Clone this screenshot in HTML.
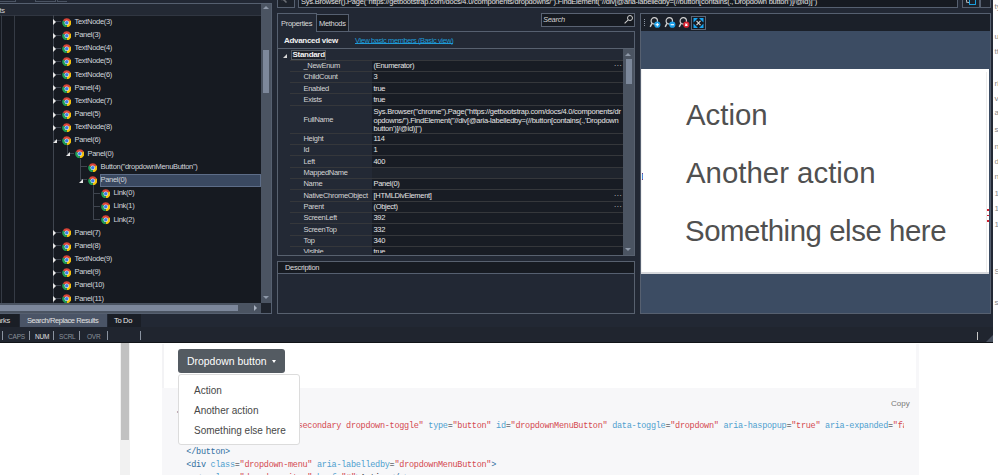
<!DOCTYPE html>
<html><head><meta charset="utf-8">
<style>
*{margin:0;padding:0;box-sizing:border-box}
html,body{width:998px;height:475px;overflow:hidden;background:#fff;font-family:"Liberation Sans",sans-serif}
.a{position:absolute}
#app{position:absolute;left:0;top:0;width:993px;height:343px;background:#222834;overflow:hidden}
.t{position:absolute;white-space:nowrap;font-size:7.5px;letter-spacing:-0.3px;color:#d8d8d8;line-height:11px}
.ci{position:absolute;width:10px;height:10px;border-radius:50%;
 background:radial-gradient(circle,#3a7ce8 0 1.5px,#f0f0f0 1.8px 2.3px,transparent 2.6px),conic-gradient(from -60deg,#d8412f 0 120deg,#f2c01a 120deg 240deg,#1e9a4a 240deg 360deg)}
.tl{position:absolute;background:#5c6370}
.arr{position:absolute;width:0;height:0;border-top:3px solid transparent;border-bottom:3px solid transparent;border-left:3px solid #e8e8e8}
.arx{position:absolute;width:0;height:0;border-left:4px solid transparent;border-bottom:4px solid #e8e8e8}
</style></head>
<body>
<div id="app">
 <!-- LEFT PANEL -->
 <div class="a" style="left:-1px;top:-1px;width:17px;height:3px;border:1px solid #4a5362;border-top:0"></div>
 <div class="a" style="left:35px;top:-1px;width:21px;height:3px;border:1px solid #4a5362;border-top:0"></div><div class="a" style="left:57px;top:-1px;width:10px;height:3px;border:1px solid #4a5362;border-top:0;border-right:0"></div>
 
 <div class="a" style="left:0;top:3px;width:272px;height:311px;border:1px solid #566070;border-left:0;background:#161a21"></div>
 <div class="a" style="left:0;top:4px;width:261px;height:12px;background:#232934;border-bottom:1px solid #303641"></div>
 <div class="t" style="left:-4px;top:5px;color:#d0d0d0">sts</div>
 <div class="a" style="left:1px;top:15px;width:1px;height:288px;background:#353b45"></div>
 <div class="a" style="left:14px;top:15px;width:1px;height:288px;background:#353b45"></div>
 <!-- v scrollbar -->
 <div class="a" style="left:261px;top:4px;width:10px;height:299px;background:#4b5462"></div>
 <div class="a" style="left:263px;top:6px;width:0;height:0;border-left:3px solid transparent;border-right:3px solid transparent;border-bottom:3px solid #8e98a8"></div>
 <div class="a" style="left:263px;top:296px;width:0;height:0;border-left:3px solid transparent;border-right:3px solid transparent;border-top:3px solid #8e98a8"></div>
 <div class="a" style="left:263px;top:49.5px;width:6px;height:43px;background:#7d889b"></div>
 <!-- h scrollbar -->
 <div class="a" style="left:0;top:303px;width:261px;height:10px;background:#4b5462"></div><div class="a" style="left:0;top:305px;width:237.5px;height:6px;background:#7c879b"></div>
 <div class="a" style="left:254px;top:305px;width:0;height:0;border-top:3px solid transparent;border-bottom:3px solid transparent;border-left:3px solid #a9b2c0"></div>
 <div class="a" style="left:261px;top:303px;width:10px;height:10px;background:#1e232c"></div>
 <svg width="0" height="0" style="position:absolute"><defs><symbol id="chr" viewBox="0 0 18 18"><path d="M9 9L1.552 4.7A8.6 8.6 0 0 1 16.448 4.7Z" fill="#db4437"/><path d="M9 9L16.448 4.7A8.6 8.6 0 0 1 9 17.6Z" fill="#f4c20d"/><path d="M9 9L9 17.6A8.6 8.6 0 0 1 1.552 4.7Z" fill="#1f9d55"/><circle cx="9" cy="9" r="4.3" fill="#f2f2f2"/><circle cx="9" cy="9" r="3.3" fill="#3b7de6"/></symbol></defs></svg><div class="tl" style="left:53px;top:15px;width:1px;height:288px;background:#3f454f"></div>
<div class="tl" style="left:54px;top:21.4px;width:7px;height:1px;background:#3f454f"></div>
<div class="arr" style="left:52.5px;top:19.4px"></div>
<svg class="a" style="left:61.7px;top:17.65px" width="9.5" height="9.5" viewBox="0 0 18 18"><use href="#chr"/></svg>
<div class="t" style="left:74.5px;top:15.9px;color:#d2d6dc">TextNode(3)</div>
<div class="tl" style="left:54px;top:34.6px;width:7px;height:1px;background:#3f454f"></div>
<div class="arr" style="left:52.5px;top:32.6px"></div>
<svg class="a" style="left:61.7px;top:30.82px" width="9.5" height="9.5" viewBox="0 0 18 18"><use href="#chr"/></svg>
<div class="t" style="left:74.5px;top:29.1px;color:#d2d6dc">Panel(3)</div>
<div class="tl" style="left:54px;top:47.7px;width:7px;height:1px;background:#3f454f"></div>
<div class="arr" style="left:52.5px;top:45.7px"></div>
<svg class="a" style="left:61.7px;top:43.99px" width="9.5" height="9.5" viewBox="0 0 18 18"><use href="#chr"/></svg>
<div class="t" style="left:74.5px;top:42.2px;color:#d2d6dc">TextNode(4)</div>
<div class="tl" style="left:54px;top:60.9px;width:7px;height:1px;background:#3f454f"></div>
<div class="arr" style="left:52.5px;top:58.9px"></div>
<svg class="a" style="left:61.7px;top:57.16px" width="9.5" height="9.5" viewBox="0 0 18 18"><use href="#chr"/></svg>
<div class="t" style="left:74.5px;top:55.4px;color:#d2d6dc">TextNode(5)</div>
<div class="tl" style="left:54px;top:74.1px;width:7px;height:1px;background:#3f454f"></div>
<div class="arr" style="left:52.5px;top:72.1px"></div>
<svg class="a" style="left:61.7px;top:70.33px" width="9.5" height="9.5" viewBox="0 0 18 18"><use href="#chr"/></svg>
<div class="t" style="left:74.5px;top:68.6px;color:#d2d6dc">TextNode(6)</div>
<div class="tl" style="left:54px;top:87.2px;width:7px;height:1px;background:#3f454f"></div>
<div class="arr" style="left:52.5px;top:85.2px"></div>
<svg class="a" style="left:61.7px;top:83.50px" width="9.5" height="9.5" viewBox="0 0 18 18"><use href="#chr"/></svg>
<div class="t" style="left:74.5px;top:81.8px;color:#d2d6dc">Panel(4)</div>
<div class="tl" style="left:54px;top:100.4px;width:7px;height:1px;background:#3f454f"></div>
<div class="arr" style="left:52.5px;top:98.4px"></div>
<svg class="a" style="left:61.7px;top:96.67px" width="9.5" height="9.5" viewBox="0 0 18 18"><use href="#chr"/></svg>
<div class="t" style="left:74.5px;top:94.9px;color:#d2d6dc">TextNode(7)</div>
<div class="tl" style="left:54px;top:113.6px;width:7px;height:1px;background:#3f454f"></div>
<div class="arr" style="left:52.5px;top:111.6px"></div>
<svg class="a" style="left:61.7px;top:109.84px" width="9.5" height="9.5" viewBox="0 0 18 18"><use href="#chr"/></svg>
<div class="t" style="left:74.5px;top:108.1px;color:#d2d6dc">Panel(5)</div>
<div class="tl" style="left:54px;top:126.8px;width:7px;height:1px;background:#3f454f"></div>
<div class="arr" style="left:52.5px;top:124.8px"></div>
<svg class="a" style="left:61.7px;top:123.01px" width="9.5" height="9.5" viewBox="0 0 18 18"><use href="#chr"/></svg>
<div class="t" style="left:74.5px;top:121.3px;color:#d2d6dc">TextNode(8)</div>
<div class="tl" style="left:54px;top:139.9px;width:7px;height:1px;background:#3f454f"></div>
<div class="arx" style="left:52.5px;top:139.2px"></div>
<svg class="a" style="left:61.7px;top:136.18px" width="9.5" height="9.5" viewBox="0 0 18 18"><use href="#chr"/></svg>
<div class="t" style="left:74.5px;top:134.4px;color:#d2d6dc">Panel(6)</div>
<div class="tl" style="left:67px;top:153.1px;width:7px;height:1px;background:#3f454f"></div>
<div class="arx" style="left:65.5px;top:152.4px"></div>
<svg class="a" style="left:74.7px;top:149.35px" width="9.5" height="9.5" viewBox="0 0 18 18"><use href="#chr"/></svg>
<div class="t" style="left:87.5px;top:147.6px;color:#d2d6dc">Panel(0)</div>
<div class="tl" style="left:80px;top:166.3px;width:7px;height:1px;background:#3f454f"></div>
<svg class="a" style="left:87.7px;top:162.52px" width="9.5" height="9.5" viewBox="0 0 18 18"><use href="#chr"/></svg>
<div class="t" style="left:100.5px;top:160.8px;color:#d2d6dc">Button(&quot;dropdownMenuButton&quot;)</div>
<div class="tl" style="left:80px;top:179.4px;width:7px;height:1px;background:#3f454f"></div>
<div class="arx" style="left:78.5px;top:178.7px"></div>
<svg class="a" style="left:87.7px;top:175.69px" width="9.5" height="9.5" viewBox="0 0 18 18"><use href="#chr"/></svg>
<div class="a" style="left:100px;top:174px;width:161px;height:13px;background:#3a4961;border:1px solid #5d6d88"></div>
<div class="t" style="left:100.5px;top:173.9px;color:#d2d6dc">Panel(0)</div>
<div class="tl" style="left:93px;top:192.6px;width:7px;height:1px;background:#3f454f"></div>
<svg class="a" style="left:100.7px;top:188.86px" width="9.5" height="9.5" viewBox="0 0 18 18"><use href="#chr"/></svg>
<div class="t" style="left:113.5px;top:187.1px;color:#d2d6dc">Link(0)</div>
<div class="tl" style="left:93px;top:205.8px;width:7px;height:1px;background:#3f454f"></div>
<svg class="a" style="left:100.7px;top:202.03px" width="9.5" height="9.5" viewBox="0 0 18 18"><use href="#chr"/></svg>
<div class="t" style="left:113.5px;top:200.3px;color:#d2d6dc">Link(1)</div>
<div class="tl" style="left:93px;top:219.0px;width:7px;height:1px;background:#3f454f"></div>
<svg class="a" style="left:100.7px;top:215.20px" width="9.5" height="9.5" viewBox="0 0 18 18"><use href="#chr"/></svg>
<div class="t" style="left:113.5px;top:213.5px;color:#d2d6dc">Link(2)</div>
<div class="tl" style="left:54px;top:232.1px;width:7px;height:1px;background:#3f454f"></div>
<div class="arr" style="left:52.5px;top:230.1px"></div>
<svg class="a" style="left:61.7px;top:228.37px" width="9.5" height="9.5" viewBox="0 0 18 18"><use href="#chr"/></svg>
<div class="t" style="left:74.5px;top:226.6px;color:#d2d6dc">Panel(7)</div>
<div class="tl" style="left:54px;top:245.3px;width:7px;height:1px;background:#3f454f"></div>
<div class="arr" style="left:52.5px;top:243.3px"></div>
<svg class="a" style="left:61.7px;top:241.54px" width="9.5" height="9.5" viewBox="0 0 18 18"><use href="#chr"/></svg>
<div class="t" style="left:74.5px;top:239.8px;color:#d2d6dc">Panel(8)</div>
<div class="tl" style="left:54px;top:258.5px;width:7px;height:1px;background:#3f454f"></div>
<div class="arr" style="left:52.5px;top:256.5px"></div>
<svg class="a" style="left:61.7px;top:254.71px" width="9.5" height="9.5" viewBox="0 0 18 18"><use href="#chr"/></svg>
<div class="t" style="left:74.5px;top:253.0px;color:#d2d6dc">TextNode(9)</div>
<div class="tl" style="left:54px;top:271.6px;width:7px;height:1px;background:#3f454f"></div>
<div class="arr" style="left:52.5px;top:269.6px"></div>
<svg class="a" style="left:61.7px;top:267.88px" width="9.5" height="9.5" viewBox="0 0 18 18"><use href="#chr"/></svg>
<div class="t" style="left:74.5px;top:266.1px;color:#d2d6dc">Panel(9)</div>
<div class="tl" style="left:54px;top:284.8px;width:7px;height:1px;background:#3f454f"></div>
<div class="arr" style="left:52.5px;top:282.8px"></div>
<svg class="a" style="left:61.7px;top:281.05px" width="9.5" height="9.5" viewBox="0 0 18 18"><use href="#chr"/></svg>
<div class="t" style="left:74.5px;top:279.3px;color:#d2d6dc">Panel(10)</div>
<div class="tl" style="left:54px;top:298.0px;width:7px;height:1px;background:#3f454f"></div>
<div class="arr" style="left:52.5px;top:296.0px"></div>
<svg class="a" style="left:61.7px;top:294.22px" width="9.5" height="9.5" viewBox="0 0 18 18"><use href="#chr"/></svg>
<div class="t" style="left:74.5px;top:292.5px;color:#d2d6dc">Panel(11)</div>
<div class="tl" style="left:66.5px;top:145.4px;width:1px;height:8.2px;background:#3f454f"></div>
<div class="tl" style="left:79.5px;top:158.6px;width:1px;height:21.3px;background:#3f454f"></div>
<div class="tl" style="left:92.5px;top:184.9px;width:1px;height:34.5px;background:#3f454f"></div>

 <!-- MIDDLE PANEL -->
 <div class="a" style="left:277px;top:-3px;width:18px;height:11px;border:1px solid #566070;background:#1d222b"></div><svg class="a" style="left:280px;top:-4px" width="10" height="8"><path d="M2 2 L6.5 6.5" stroke="#6a6e74" stroke-width="1.6"/><path d="M1 3.5 L5 3.5" stroke="#6a6e74" stroke-width="1.4"/></svg>
 <div class="a" style="left:298px;top:-3px;width:660px;height:11px;border:1px solid #566070;background:#161a21;overflow:hidden">
  <div class="t" style="left:2px;top:-1.6px;letter-spacing:-0.22px;color:#e0e0e0">Sys.Browser().Page("https://getbootstrap.com/docs/4.0/components/dropdowns/").FindElement("//div[@aria-labelledby=(//button[contains(.,'Dropdown button')]/@id)]")</div>
 </div>
 <div class="a" style="left:962px;top:-3px;width:18px;height:11px;border:1px solid #566070;background:#1d222b"></div>
 <div class="a" style="left:969px;top:-1px;width:7px;height:6px;border:1.3px solid #1aa0e0;border-top:0;border-radius:0 0 1px 1px"></div><div class="a" style="left:966px;top:-2px;width:3px;height:5px;border:1.2px solid #b8b8b8;border-right:0;border-radius:2px 0 0 2px"></div>
 <div class="a" style="left:980px;top:-3px;width:11px;height:11px;border:1px solid #566070;background:#1d222b"></div>

 <!-- tabs -->
 <div class="a" style="left:277px;top:31px;width:358px;height:225px;border:1px solid #566070;background:#232935"></div>
 <div class="a" style="left:277px;top:13px;width:40px;height:19px;border:1px solid #566070;border-bottom:0;background:#232935"></div>
 <div class="t" style="left:281px;top:17.5px;color:#dadada">Properties</div>
 <div class="a" style="left:316px;top:14px;width:33px;height:17px;border:1px solid #566070;border-bottom:0;background:#181c23"></div>
 <div class="t" style="left:319px;top:17.5px;color:#dadada">Methods</div>
 <!-- search -->
 <div class="a" style="left:541px;top:13px;width:94px;height:14px;border:1px solid #5a6373;background:#161a21"></div>
 <div class="t" style="left:543px;top:14px;font-style:italic;color:#d0d0d0">Search</div>
 <div class="a" style="left:627px;top:15px;width:6px;height:6px;border:1.2px solid #d0d0d0;border-radius:50%"></div>
 <div class="a" style="left:624px;top:21px;width:5px;height:1.3px;background:#d0d0d0;transform:rotate(-45deg)"></div>

 <div class="t" style="left:284px;top:35px;font-size:8px;font-weight:bold;color:#f0f0f0">Advanced view</div>
 <div class="a" style="left:355px;top:43px;width:98px;height:1px;background:#1e9ad6"></div><div class="t" style="left:355px;top:35px;letter-spacing:-0.43px;color:#1e9ad6">View basic members (Basic view)</div>
 <!-- grid -->
 <div class="a" style="left:277px;top:48px;width:358px;height:208px;border:1px solid #58616f;background:#232935;overflow:hidden" id="grid"><div class="a" style="left:13px;top:1px;width:35px;height:10px;border:1px solid #50575f;background:#1c2028"></div>
<div class="t" style="left:14.5px;top:-0.5px;font-size:8px;letter-spacing:-0.3px;font-weight:bold;color:#f2f2f2">Standard</div>
<div class="a" style="left:5px;top:4.5px;width:0;height:0;border-left:4px solid transparent;border-bottom:4px solid #d8d8d8"></div>
<div class="a" style="left:94px;top:11.30px;width:252px;height:11.33px;background:#181c24"></div>
<div class="a" style="left:12px;top:10.50px;width:334px;height:1px;background:#35373b"></div>
<div class="t" style="left:25.5px;top:10.96px;color:#d4d4d4">_NewEnum</div>
<div class="t" style="left:95.5px;top:10.96px;color:#e6e6e6">(Enumerator)</div>
<div class="t" style="left:336px;top:8.96px;color:#cfcfcf;font-size:8px;letter-spacing:0.5px">...</div>
<div class="a" style="left:94px;top:22.63px;width:252px;height:11.33px;background:#181c24"></div>
<div class="a" style="left:12px;top:21.83px;width:334px;height:1px;background:#35373b"></div>
<div class="t" style="left:25.5px;top:22.30px;color:#d4d4d4">ChildCount</div>
<div class="t" style="left:95.5px;top:22.30px;color:#e6e6e6">3</div>
<div class="a" style="left:94px;top:33.96px;width:252px;height:11.33px;background:#181c24"></div>
<div class="a" style="left:12px;top:33.16px;width:334px;height:1px;background:#35373b"></div>
<div class="t" style="left:25.5px;top:33.62px;color:#d4d4d4">Enabled</div>
<div class="t" style="left:95.5px;top:33.62px;color:#e6e6e6">true</div>
<div class="a" style="left:94px;top:45.29px;width:252px;height:11.33px;background:#181c24"></div>
<div class="a" style="left:12px;top:44.49px;width:334px;height:1px;background:#35373b"></div>
<div class="t" style="left:25.5px;top:44.95px;color:#d4d4d4">Exists</div>
<div class="t" style="left:95.5px;top:44.95px;color:#e6e6e6">true</div>
<div class="a" style="left:94px;top:56.62px;width:252px;height:27.76px;background:#181c24"></div>
<div class="a" style="left:12px;top:55.82px;width:334px;height:1px;background:#35373b"></div>
<div class="t" style="left:25.5px;top:64.50px;color:#d4d4d4">FullName</div>
<div class="t" style="left:95.5px;top:56.72px;letter-spacing:-0.235px;color:#e6e6e6">Sys.Browser(&quot;chrome&quot;).Page(&quot;https://getbootstrap.com/docs/4.0/components/dr</div>
<div class="t" style="left:95.5px;top:65.57px;letter-spacing:-0.235px;color:#e6e6e6">opdowns/&quot;).FindElement(&quot;//div[@aria-labelledby=(//button[contains(.,&#x27;Dropdown</div>
<div class="t" style="left:95.5px;top:74.42px;letter-spacing:-0.235px;color:#e6e6e6">button&#x27;)]/@id)]&quot;)</div>
<div class="a" style="left:94px;top:84.38px;width:252px;height:11.33px;background:#181c24"></div>
<div class="a" style="left:12px;top:83.58px;width:334px;height:1px;background:#35373b"></div>
<div class="t" style="left:25.5px;top:84.04px;color:#d4d4d4">Height</div>
<div class="t" style="left:95.5px;top:84.04px;color:#e6e6e6">114</div>
<div class="a" style="left:94px;top:95.71px;width:252px;height:11.33px;background:#181c24"></div>
<div class="a" style="left:12px;top:94.91px;width:334px;height:1px;background:#35373b"></div>
<div class="t" style="left:25.5px;top:95.37px;color:#d4d4d4">Id</div>
<div class="t" style="left:95.5px;top:95.37px;color:#e6e6e6">1</div>
<div class="a" style="left:94px;top:107.04px;width:252px;height:11.33px;background:#181c24"></div>
<div class="a" style="left:12px;top:106.24px;width:334px;height:1px;background:#35373b"></div>
<div class="t" style="left:25.5px;top:106.70px;color:#d4d4d4">Left</div>
<div class="t" style="left:95.5px;top:106.70px;color:#e6e6e6">400</div>
<div class="a" style="left:94px;top:118.37px;width:252px;height:11.33px;background:#1f242d"></div>
<div class="a" style="left:12px;top:117.57px;width:334px;height:1px;background:#35373b"></div>
<div class="t" style="left:25.5px;top:118.03px;color:#d4d4d4">MappedName</div>
<div class="a" style="left:94px;top:129.70px;width:252px;height:11.33px;background:#181c24"></div>
<div class="a" style="left:12px;top:128.90px;width:334px;height:1px;background:#35373b"></div>
<div class="t" style="left:25.5px;top:129.36px;color:#d4d4d4">Name</div>
<div class="t" style="left:95.5px;top:129.36px;color:#e6e6e6">Panel(0)</div>
<div class="a" style="left:94px;top:141.03px;width:252px;height:11.33px;background:#181c24"></div>
<div class="a" style="left:12px;top:140.23px;width:334px;height:1px;background:#35373b"></div>
<div class="t" style="left:25.5px;top:140.69px;color:#d4d4d4">NativeChromeObject</div>
<div class="t" style="left:95.5px;top:140.69px;color:#e6e6e6">[HTMLDivElement]</div>
<div class="t" style="left:336px;top:138.69px;color:#cfcfcf;font-size:8px;letter-spacing:0.5px">...</div>
<div class="a" style="left:94px;top:152.36px;width:252px;height:11.33px;background:#181c24"></div>
<div class="a" style="left:12px;top:151.56px;width:334px;height:1px;background:#35373b"></div>
<div class="t" style="left:25.5px;top:152.02px;color:#d4d4d4">Parent</div>
<div class="t" style="left:95.5px;top:152.02px;color:#e6e6e6">(Object)</div>
<div class="t" style="left:336px;top:150.02px;color:#cfcfcf;font-size:8px;letter-spacing:0.5px">...</div>
<div class="a" style="left:94px;top:163.69px;width:252px;height:11.33px;background:#181c24"></div>
<div class="a" style="left:12px;top:162.89px;width:334px;height:1px;background:#35373b"></div>
<div class="t" style="left:25.5px;top:163.35px;color:#d4d4d4">ScreenLeft</div>
<div class="t" style="left:95.5px;top:163.35px;color:#e6e6e6">392</div>
<div class="a" style="left:94px;top:175.02px;width:252px;height:11.33px;background:#181c24"></div>
<div class="a" style="left:12px;top:174.22px;width:334px;height:1px;background:#35373b"></div>
<div class="t" style="left:25.5px;top:174.68px;color:#d4d4d4">ScreenTop</div>
<div class="t" style="left:95.5px;top:174.68px;color:#e6e6e6">332</div>
<div class="a" style="left:94px;top:186.35px;width:252px;height:11.33px;background:#181c24"></div>
<div class="a" style="left:12px;top:185.55px;width:334px;height:1px;background:#35373b"></div>
<div class="t" style="left:25.5px;top:186.01px;color:#d4d4d4">Top</div>
<div class="t" style="left:95.5px;top:186.01px;color:#e6e6e6">340</div>
<div class="a" style="left:94px;top:197.68px;width:252px;height:11.33px;background:#181c24"></div>
<div class="a" style="left:12px;top:196.88px;width:334px;height:1px;background:#35373b"></div>
<div class="t" style="left:25.5px;top:197.34px;color:#d4d4d4">Visible</div>
<div class="t" style="left:95.5px;top:197.34px;color:#e6e6e6">true</div>
<div class="a" style="left:0;top:204.3px;width:94px;height:2px;background:#232935"></div>
<div class="a" style="left:94px;top:204.3px;width:252px;height:2px;background:#181c24"></div>
<div class="a" style="left:345px;top:0;width:11px;height:206px;background:#4b5462"></div>
<div class="a" style="left:347px;top:4px;width:0;height:0;border-left:3.5px solid transparent;border-right:3.5px solid transparent;border-bottom:3.5px solid #8e98a8"></div>
<div class="a" style="left:347px;top:199px;width:0;height:0;border-left:3.5px solid transparent;border-right:3.5px solid transparent;border-top:3.5px solid #8e98a8"></div>
<div class="a" style="left:348px;top:10px;width:5.5px;height:24.5px;background:#7c889b"></div></div>

 <!-- description -->
 <div class="a" style="left:277px;top:261px;width:358px;height:53px;border:1px solid #58616f;background:#222834"></div>
 <div class="a" style="left:278px;top:262px;width:356px;height:12px;background:#171b22;border-bottom:1px solid #566070"></div>
 <div class="t" style="left:285px;top:262px;color:#dcdcdc">Description</div>

 <!-- RIGHT PANEL -->
 <div class="a" style="left:640px;top:13px;width:351px;height:301px;border:1px solid #566070;background:#3c4c63"></div>
 <div class="a" style="left:641px;top:14px;width:349px;height:17px;background:#1b2029"></div>
 <div class="a" style="left:643.5px;top:18.5px;width:1px;height:1px;background:#8a93a0"></div>
<div class="a" style="left:643.5px;top:20.8px;width:1px;height:1px;background:#8a93a0"></div>
<div class="a" style="left:643.5px;top:23.1px;width:1px;height:1px;background:#8a93a0"></div>
<div class="a" style="left:643.5px;top:25.4px;width:1px;height:1px;background:#8a93a0"></div>
<svg class="a" style="left:649px;top:16px" width="13" height="14" viewBox="0 0 13 14"><circle cx="5.3" cy="4.9" r="3.2" fill="none" stroke="#d0d0d0" stroke-width="1.2"/><line x1="3" y1="7.4" x2="1.2" y2="10.8" stroke="#d0d0d0" stroke-width="1.4"/><circle cx="8.3" cy="8.7" r="3.1" fill="#1a9ee8"/><path d="M6.6 8.7h3.4M8.3 7v3.4" stroke="#fff" stroke-width="1"/></svg>
<svg class="a" style="left:663.5px;top:16px" width="13" height="14" viewBox="0 0 13 14"><circle cx="5.3" cy="4.9" r="3.2" fill="none" stroke="#d0d0d0" stroke-width="1.2"/><line x1="3" y1="7.4" x2="1.2" y2="10.8" stroke="#d0d0d0" stroke-width="1.4"/><circle cx="8.3" cy="8.7" r="3.1" fill="#1a9ee8"/><path d="M6.6 8.7h3.4" stroke="#fff" stroke-width="1.1"/></svg>
<svg class="a" style="left:678px;top:16px" width="13" height="14" viewBox="0 0 13 14"><circle cx="5.3" cy="4.9" r="3.2" fill="none" stroke="#d0d0d0" stroke-width="1.2"/><line x1="3" y1="7.4" x2="1.2" y2="10.8" stroke="#d0d0d0" stroke-width="1.4"/><circle cx="8.3" cy="8.7" r="3.1" fill="#d9202e"/><path d="M7.2 7.6l2.2 2.2M9.4 7.6l-2.2 2.2" stroke="#fff" stroke-width="1.1"/></svg>
<div class="a" style="left:691px;top:16px;width:15px;height:14px;border:1px solid #5c6677;background:#161a21"></div>
<svg class="a" style="left:692px;top:17px" width="13" height="12" viewBox="0 0 13 12"><path d="M1.5 1h4.5L1.5 5.5z M11.5 1h-4.5l4.5 4.5z M1.5 11h4.5L1.5 6.5z M11.5 11h-4.5l4.5-4.5z" fill="#18a4f0"/><path d="M4.5 3.8 L8.5 8.2 M8.5 3.8 L4.5 8.2" stroke="#d8d8d8" stroke-width="1.1"/></svg>
 <div class="a" style="left:641px;top:69px;width:348px;height:205px;background:#fff"><div class="a" style="left:345px;top:3px;width:1px;height:200px;background:#ececec"></div><div class="a" style="left:0;top:104px;width:1.5px;height:7px;background:#4a8ad8;border-top:1.5px solid #6a3a8a;border-bottom:1.5px solid #6a3a8a"></div><div class="a" style="left:0;top:0;width:1px;height:205px;background:#f0f0f0"></div><div class="a" style="left:0;top:203px;width:348px;height:2px;background:#d6d8dc"></div><div class="a" style="left:346px;top:140px;width:2px;height:2px;background:#d02030"></div><div class="a" style="left:346px;top:145.5px;width:2px;height:1.5px;background:#d02030"></div><div class="a" style="left:346px;top:151px;width:2px;height:2px;background:#d02030"></div>
  <div class="a" style="left:45px;top:29px;font-size:29.4px;color:#505050;line-height:34px;white-space:nowrap">Action</div>
  <div class="a" style="left:45px;top:87px;font-size:29.4px;color:#505050;line-height:34px;white-space:nowrap">Another action</div>
  <div class="a" style="left:44px;top:144.5px;font-size:29.4px;letter-spacing:-0.45px;color:#505050;line-height:34px;white-space:nowrap">Something else here</div>
 </div>

 <!-- bottom tabs + status -->
 <div class="a" style="left:0;top:314px;width:19px;height:12.5px;background:#1a1e26"></div>
 <div class="t" style="left:-3px;top:315px;color:#d8d8d8">arks</div>
 <div class="a" style="left:20px;top:314px;width:87px;height:12.5px;background:#4a5466"></div>
 <div class="t" style="left:27px;top:315px;letter-spacing:-0.42px;color:#e0e0e0">Search/Replace Results</div>
 <div class="a" style="left:108px;top:314px;width:33px;height:12.5px;background:#1a1e26"></div>
 <div class="t" style="left:114px;top:315px;color:#e8e8e8">To Do</div>
 <div class="a" style="left:0;top:327px;width:993px;height:15px;background:#20252f"></div>
 <div class="a" style="left:1.5px;top:331px;width:1px;height:9px;background:#8a93a0"></div>
<div class="a" style="left:28.5px;top:331px;width:1px;height:9px;background:#8a93a0"></div>
<div class="a" style="left:53px;top:331px;width:1px;height:9px;background:#8a93a0"></div>
<div class="a" style="left:79px;top:331px;width:1px;height:9px;background:#8a93a0"></div>
<div class="a" style="left:106.5px;top:331px;width:1px;height:9px;background:#8a93a0"></div>
<div class="a" style="left:139.5px;top:331px;width:1px;height:9px;background:#8a93a0"></div>
<div class="t" style="left:8px;top:331px;font-size:6.5px;letter-spacing:-0.2px;color:#8a909a">CAPS</div>
<div class="t" style="left:35px;top:331px;font-size:6.5px;letter-spacing:-0.2px;color:#e0e0e0">NUM</div>
<div class="t" style="left:59px;top:331px;font-size:6.5px;letter-spacing:-0.2px;color:#8a909a">SCRL</div>
<div class="t" style="left:87px;top:331px;font-size:6.5px;letter-spacing:-0.2px;color:#8a909a">OVR</div>
<div class="a" style="left:977px;top:332px;width:1px;height:8px;background:#c8c8c8"></div>
 <div class="a" style="left:0;top:342px;width:993px;height:1px;background:#111418"></div><svg class="a" style="left:985px;top:334px" width="8" height="8"><path d="M8 1 L8 8 L1 8z" fill="#4a5260"/></svg>
</div>

<!-- right white strip -->
<div class="a" style="left:993px;top:0;width:5px;height:343px;background:#fff;overflow:hidden"><div class="a" style="left:1.5px;top:1.5px;font-size:8px;line-height:10px;color:#8c8c8c;white-space:nowrap">ty</div><div class="a" style="left:1.5px;top:31.5px;font-size:8px;line-height:10px;color:#8c8c8c;white-space:nowrap">u</div><div class="a" style="left:1.5px;top:46.5px;font-size:8px;line-height:10px;color:#8c8c8c;white-space:nowrap">tt</div><div class="a" style="left:1.5px;top:78.5px;font-size:8px;line-height:10px;color:#8c8c8c;white-space:nowrap">ri</div><div class="a" style="left:1.5px;top:93.5px;font-size:8px;line-height:10px;color:#8c8c8c;white-space:nowrap">v</div><div class="a" style="left:1.5px;top:107.5px;font-size:8px;line-height:10px;color:#8c8c8c;white-space:nowrap">ar</div><div class="a" style="left:1.5px;top:124.5px;font-size:8px;line-height:10px;color:#8c8c8c;white-space:nowrap">ss</div><div class="a" style="left:1.5px;top:141.5px;font-size:8px;line-height:10px;color:#8c8c8c;white-space:nowrap">n</div><div class="a" style="left:1.5px;top:156.5px;font-size:8px;line-height:10px;color:#8c8c8c;white-space:nowrap">d</div><div class="a" style="left:1.5px;top:171.5px;font-size:8px;line-height:10px;color:#8c8c8c;white-space:nowrap">n</div><div class="a" style="left:1.5px;top:188.5px;font-size:8px;line-height:10px;color:#8c8c8c;white-space:nowrap">1</div><div class="a" style="left:1.5px;top:203.5px;font-size:8px;line-height:10px;color:#8c8c8c;white-space:nowrap">18</div><div class="a" style="left:1.5px;top:219.5px;font-size:8px;line-height:10px;color:#8c8c8c;white-space:nowrap">14</div><div class="a" style="left:1.5px;top:266.5px;font-size:8px;line-height:10px;color:#8c8c8c;white-space:nowrap">S</div><div class="a" style="left:1.5px;top:297.5px;font-size:8px;line-height:10px;color:#8c8c8c;white-space:nowrap">s</div></div>

<!-- BOOTSTRAP PAGE -->
<div class="a" style="left:0;top:343px;width:998px;height:132px;background:#fff">
 <div class="a" style="left:120px;top:0;width:10px;height:132px;background:#f1f1f1"></div>
 <div class="a" style="left:121px;top:0;width:8px;height:97px;background:#c1c1c1"></div>
 <div class="a" style="left:162px;top:1px;width:1.5px;height:132px;background:#f3f3f5"></div>
 <div class="a" style="left:916px;top:1px;width:3px;height:132px;background:#f7f7f9"></div>
 <div class="a" style="left:162px;top:45px;width:757px;height:90px;background:#f7f7f9"></div>
 <div class="a" style="left:891px;top:56px;font-size:8px;color:#777;white-space:nowrap">Copy</div>
 <div class="a" style="left:0;top:0;width:904px;height:132px;overflow:hidden"><div class="a" style="left:176.7px;top:64.6px;font-family:'Liberation Mono',monospace;font-size:8.5px;letter-spacing:-0.263px;line-height:10px;white-space:pre;color:#212529"><span style="color:#2f6f9f">&lt;</span><span style="color:#2f6f9f">div</span><span style="color:#212529"> </span><span style="color:#4f9fcf">class</span><span style="color:#212529">=</span><span style="color:#d44950">&quot;dropdown&quot;</span><span style="color:#2f6f9f">&gt;</span></div>
<div class="a" style="left:176.7px;top:77.7px;font-family:'Liberation Mono',monospace;font-size:8.5px;letter-spacing:-0.263px;line-height:10px;white-space:pre;color:#212529"><span style="color:#2f6f9f">  &lt;button</span><span style="color:#212529"> </span><span style="color:#4f9fcf">class</span><span style="color:#212529">=</span><span style="color:#d44950">&quot;btn btn-secondary dropdown-toggle&quot;</span><span style="color:#212529"> </span><span style="color:#4f9fcf">type</span><span style="color:#212529">=</span><span style="color:#d44950">&quot;button&quot;</span><span style="color:#212529"> </span><span style="color:#4f9fcf">id</span><span style="color:#212529">=</span><span style="color:#d44950">&quot;dropdownMenuButton&quot;</span><span style="color:#212529"> </span><span style="color:#4f9fcf">data-toggle</span><span style="color:#212529">=</span><span style="color:#d44950">&quot;dropdown&quot;</span><span style="color:#212529"> </span><span style="color:#4f9fcf">aria-haspopup</span><span style="color:#212529">=</span><span style="color:#d44950">&quot;true&quot;</span><span style="color:#212529"> </span><span style="color:#4f9fcf">aria-expanded</span><span style="color:#212529">=</span><span style="color:#d44950">&quot;false&quot;</span><span style="color:#2f6f9f">&gt;</span></div>
<div class="a" style="left:176.7px;top:90.8px;font-family:'Liberation Mono',monospace;font-size:8.5px;letter-spacing:-0.263px;line-height:10px;white-space:pre;color:#212529"><span style="color:#212529">    Dropdown button</span></div>
<div class="a" style="left:176.7px;top:104.0px;font-family:'Liberation Mono',monospace;font-size:8.5px;letter-spacing:-0.263px;line-height:10px;white-space:pre;color:#212529"><span style="color:#2f6f9f">  &lt;/button&gt;</span></div>
<div class="a" style="left:176.7px;top:116.9px;font-family:'Liberation Mono',monospace;font-size:8.5px;letter-spacing:-0.263px;line-height:10px;white-space:pre;color:#212529"><span style="color:#2f6f9f">  &lt;div</span><span style="color:#212529"> </span><span style="color:#4f9fcf">class</span><span style="color:#212529">=</span><span style="color:#d44950">&quot;dropdown-menu&quot;</span><span style="color:#212529"> </span><span style="color:#4f9fcf">aria-labelledby</span><span style="color:#212529">=</span><span style="color:#d44950">&quot;dropdownMenuButton&quot;</span><span style="color:#2f6f9f">&gt;</span></div>
<div class="a" style="left:176.7px;top:130.0px;font-family:'Liberation Mono',monospace;font-size:8.5px;letter-spacing:-0.263px;line-height:10px;white-space:pre;color:#212529"><span style="color:#2f6f9f">    &lt;a</span><span style="color:#212529"> </span><span style="color:#4f9fcf">class</span><span style="color:#212529">=</span><span style="color:#d44950">&quot;dropdown-item&quot;</span><span style="color:#212529"> </span><span style="color:#4f9fcf">href</span><span style="color:#212529">=</span><span style="color:#d44950">&quot;#&quot;</span><span style="color:#2f6f9f">&gt;</span><span style="color:#212529">Action</span><span style="color:#2f6f9f">&lt;/a&gt;</span></div></div>
 <div class="a" style="left:178px;top:6px;width:107px;height:24px;background:#545b62;border-radius:3px"></div>
 <div class="a" style="left:187px;top:11.5px;font-size:10.45px;color:#fff;line-height:14px;white-space:nowrap">Dropdown button</div>
 <div class="a" style="left:272px;top:17px;width:0;height:0;border-left:2.5px solid transparent;border-right:2.5px solid transparent;border-top:3px solid #fff"></div>
 <div class="a" style="left:178px;top:31px;width:122px;height:71px;background:#fff;border:1px solid #dcdcdc;border-radius:3px"></div>
 <div class="a" style="left:194px;top:41px;font-size:10px;color:#474747;line-height:14px;white-space:nowrap">Action</div>
 <div class="a" style="left:194px;top:61px;font-size:10px;color:#474747;line-height:14px;white-space:nowrap">Another action</div>
 <div class="a" style="left:194px;top:81px;font-size:10px;color:#474747;line-height:14px;white-space:nowrap">Something else here</div>
</div>
</body></html>
